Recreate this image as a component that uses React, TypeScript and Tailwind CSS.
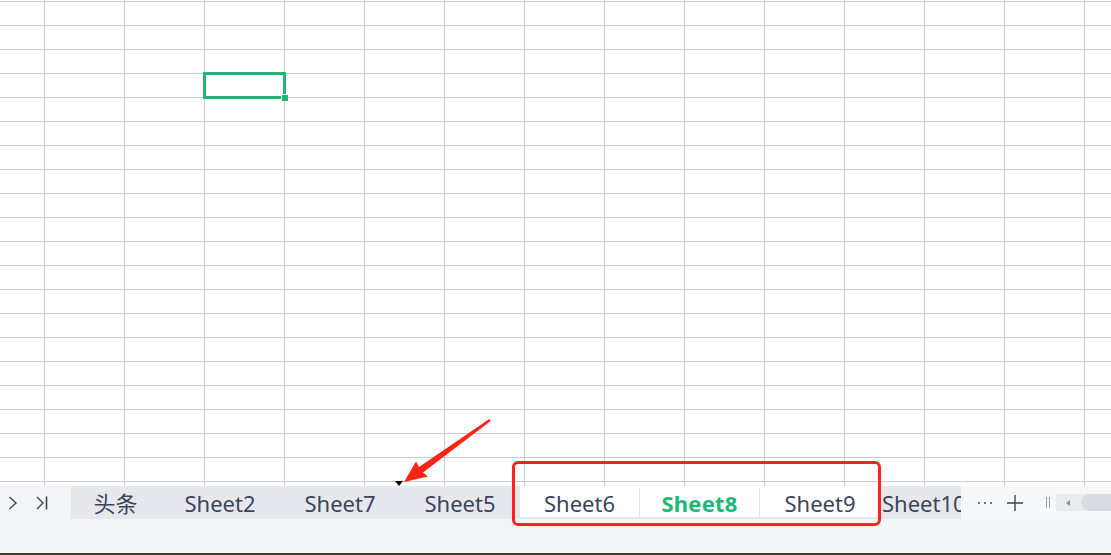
import React from "react";

const ROWS = 20;
const COLS = 13;
const font = "font-['Noto_Sans','Noto_Sans_CJK_SC',sans-serif]";

const GridRow = ({ h, last }: { h: string; last?: boolean }) => (
  <div className={`flex ${h} ${last ? "" : "border-b border-[#c6cbd7]"}`}>
    <div className="w-[45px] shrink-0 border-r border-[#c6cbd7]" />
    {Array.from({ length: COLS }).map((_, i) => (
      <div key={i} className="w-[80px] shrink-0 border-r border-[#c6cbd7]" />
    ))}
    <div className="flex-1" />
  </div>
);

const Tab = ({
  label,
  w,
  active,
  divider,
}: {
  label: string;
  w: string;
  active?: boolean;
  divider?: boolean;
}) => (
  <div
    className={`${w} shrink-0 flex items-center justify-center ${
      divider ? "border-r border-[#e1e3e8]" : ""
    }`}
  >
    <span
      className={
        active
          ? "text-[#1eb979] font-bold tracking-[0.2px]"
          : "text-[#3b4559]"
      }
    >
      {label}
    </span>
  </div>
);

export default function App() {
  return (
    <div className={`relative w-[1111px] h-[555px] flex flex-col bg-white overflow-hidden ${font}`}>
      {/* sheet grid */}
      <div className="h-[486px] shrink-0 overflow-hidden">
        <GridRow h="h-[2px]" />
        {Array.from({ length: ROWS }).map((_, i) => (
          <GridRow key={i} h="h-[24px]" />
        ))}
        <GridRow h="h-[5px]" last />
      </div>

      {/* tab bar */}
      <div className="h-[33px] shrink-0 flex text-[22px] leading-[30px]">
        <div className="w-[71px] shrink-0 bg-[#f3f4f6] flex items-center text-[#3b4559]">
          <svg width="12" height="16" viewBox="0 0 12 16" className="ml-[7px]">
            <path d="M2.5 2 L9 8 L2.5 14" fill="none" stroke="currentColor" strokeWidth="1.4" />
          </svg>
          <svg width="16" height="16" viewBox="0 0 16 16" className="ml-[16px]">
            <path d="M2 2 L8 8 L2 14" fill="none" stroke="currentColor" strokeWidth="1.4" />
            <path d="M11.5 1.5 V14.5" fill="none" stroke="currentColor" strokeWidth="1.6" />
          </svg>
        </div>

        <div className="flex-1 bg-[#e6e8ed] flex overflow-hidden">
          <Tab label="头条" w="w-[89px]" />
          <Tab label="Sheet2" w="w-[120px]" />
          <Tab label="Sheet7" w="w-[120px]" />
          <Tab label="Sheet5" w="w-[120px]" />
          <div className="h-[31px] pt-[2px] bg-white flex shrink-0">
            <Tab label="Sheet6" w="w-[120px]" divider />
            <Tab label="Sheet8" w="w-[120px]" active divider />
            <Tab label="Sheet9" w="w-[120px]" />
          </div>
          <div className="shrink-0 pl-[2px] flex items-center text-[#3b4559] whitespace-nowrap">
            Sheet10
          </div>
        </div>

        <div className="w-[150px] shrink-0 bg-[#f6f7f9] flex items-center text-[#3b4559]">
          <div className="ml-[17px] flex gap-[4px]">
            <span className="w-[2px] h-[2px] rounded-full bg-[#3b4559]" />
            <span className="w-[2px] h-[2px] rounded-full bg-[#3b4559]" />
            <span className="w-[2px] h-[2px] rounded-full bg-[#3b4559]" />
          </div>
          <svg width="18" height="18" viewBox="0 0 18 18" className="ml-[14px]">
            <path d="M9 1 V17 M1 9 H17" stroke="currentColor" strokeWidth="1.4" />
          </svg>
          <div className="ml-[22px] flex gap-[2px] h-[11px]">
            <span className="w-[1px] h-full bg-[#9aa0ab]" />
            <span className="w-[1px] h-full bg-[#9aa0ab]" />
          </div>
          <div className="ml-[6px] flex-1 h-[17px] bg-[#eaecf0] flex items-center">
            <span className="ml-[10px] w-0 h-0 border-y-[3px] border-y-transparent border-r-[4px] border-r-[#8a909b]" />
            <span className="ml-[11px] flex-1 h-[17px] rounded-l-full bg-[#d8dbe0]" />
          </div>
        </div>
      </div>

      <div className="flex-1 bg-[#f4f5f7]" />
      <div className="h-[2px] shrink-0 bg-[#3d3d2c]" />

      {/* active cell */}
      <div className="absolute left-[203px] top-[72px] w-[83px] h-[27px] border-[3px] border-[#21b573]" />
      <div className="absolute left-[281px] top-[94px] w-[7px] h-[7px] bg-[#21b573] border-l border-t border-white" />

      {/* drop marker */}
      <div className="absolute left-[395px] top-[481px] w-0 h-0 border-x-[4px] border-x-transparent border-t-[5px] border-t-black" />

      {/* annotations */}
      <div className="absolute left-[512px] top-[461px] w-[369px] h-[65px] border-[3px] border-[#ff2020] rounded-[6px]" />
      <svg className="absolute left-0 top-0" width="1111" height="555" viewBox="0 0 1111 555">
        <polygon
          points="404,482 428,476.5 423,472.5 490.7,421 489.3,419 419,466.9 416,461.5"
          fill="#ff2414"
        />
      </svg>
    </div>
  );
}
